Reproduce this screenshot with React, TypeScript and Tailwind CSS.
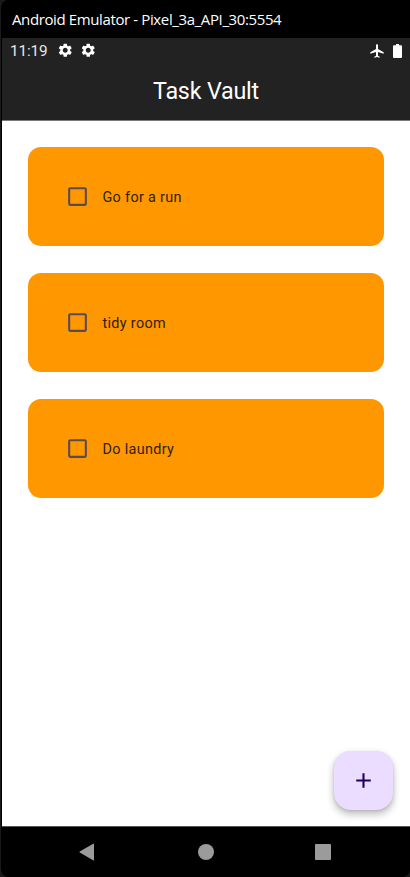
import { MdSettings, MdAirplanemodeActive, MdAdd, MdCheckBoxOutlineBlank } from "react-icons/md";

const tasks = ["Go for a run", "tidy room", "Do laundry"];

function TitleBar() {
  return (
    <div className="flex h-[38px] shrink-0 items-center bg-black pl-2.5">
      <span className="whitespace-nowrap font-['Open_Sans',sans-serif] text-[15px] leading-5 tracking-[-0.38px] text-white">
        Android Emulator - Pixel_3a_API_30:5554
      </span>
    </div>
  );
}

function Header() {
  return (
    <header className="h-[83px] shrink-0 border-b border-[#7b7779] bg-[#222222] text-white">
      <div className="flex h-[25px] items-center pl-2 pr-[8.5px]">
        <span className="w-[37px] text-[15.3px] leading-5 tracking-[-0.15px] text-[#e8e8e8]">11:19</span>
        <MdSettings className="ml-[10px] size-[16.5px]" />
        <MdSettings className="ml-[6.5px] size-[16.5px]" />
        <MdAirplanemodeActive className="ml-auto size-[16px]" />
        <svg className="ml-[7.5px] h-[14px] w-[9px]" viewBox="0 0 9 14" fill="currentColor">
          <path d="M3 0h3v1.3h2q1 0 1 1V13q0 1-1 1H1q-1 0-1-1V2.3q0-1 1-1h2Z" />
        </svg>
      </div>
      <h1 className="pt-[13px] text-center text-[23.3px] leading-[30px] tracking-[-0.2px]">Task Vault</h1>
    </header>
  );
}

function TaskCard({ name }: { name: string }) {
  return (
    <li className="flex h-[99.3px] items-center rounded-[13px] bg-[#ff9800] pl-[37.3px]">
      <MdCheckBoxOutlineBlank className="size-[25px] text-[#5b4a52]" />
      <span className="ml-[12.5px] pt-[2.4px] text-[14.4px] leading-5 tracking-[0.33px] text-[#30210f]">{name}</span>
    </li>
  );
}

function NavBar() {
  return (
    <nav className="flex h-[51px] shrink-0 items-center border-t border-[#555] bg-black pl-[77px] text-[#9b9b9b]">
      <svg className="h-[18px] w-[16px]" viewBox="0 0 16 18" fill="currentColor">
        <path d="M14.6.4Q15 .2 15 .8V17q0 .6-.5.4L.8 9.6Q0 9 .8 8.4Z" />
      </svg>
      <div className="ml-[102.5px] size-[16px] rounded-full bg-[#9b9b9b]" />
      <div className="ml-[101.5px] size-[16px] rounded-[1px] bg-[#9b9b9b]" />
    </nav>
  );
}

export default function App() {
  return (
    <div className="h-[877px] w-[410px] overflow-hidden bg-[#191919] pl-px font-[Roboto,sans-serif]">
      <div className="flex h-full flex-col overflow-hidden rounded-l-[8px] rounded-br-[8px] bg-black pl-px">
        <TitleBar />
        <Header />
        <main className="relative flex-1 bg-white pl-[25.7px] pr-[26.4px] pt-[26.2px]">
          <ul className="flex flex-col gap-[26.6px]">
            {tasks.map((name) => (
              <TaskCard key={name} name={name} />
            ))}
          </ul>
          <button
            aria-label="Add task"
            className="absolute bottom-[15.6px] right-[16.6px] flex size-[59px] items-center justify-center rounded-[17px] bg-[#eaddff] text-[#21005d] shadow-[0_4px_7px_1px_rgba(0,0,0,0.22),0_1px_3px_rgba(0,0,0,0.12)]"
          >
            <MdAdd className="size-[25px]" />
          </button>
        </main>
        <NavBar />
      </div>
    </div>
  );
}
